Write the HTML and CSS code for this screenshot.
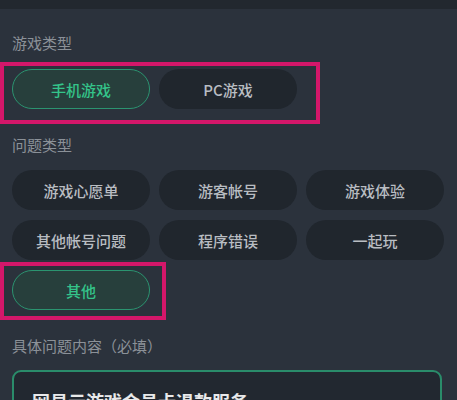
FILE: index.html
```html
<!DOCTYPE html>
<html lang="zh-CN">
<head>
    <meta charset="UTF-8">
    <meta name="viewport" content="width=device-width, initial-scale=1.0">
    <title>问题反馈</title>
    <link rel="stylesheet" href="styles.css">
</head>
<body>
    <div class="topbar"></div>
    <div class="form">
        <div class="label first">游戏类型</div>
        <div class="chip-row marked">
            <div class="chip selected">手机游戏</div>
            <div class="chip">PC游戏</div>
            <div class="mark mark-game"></div>
        </div>

        <div class="label">问题类型</div>
        <div class="chip-grid">
            <div class="chip">游戏心愿单</div>
            <div class="chip">游客帐号</div>
            <div class="chip">游戏体验</div>
            <div class="chip">其他帐号问题</div>
            <div class="chip">程序错误</div>
            <div class="chip">一起玩</div>
        </div>
        <div class="chip-row marked last-row">
            <div class="chip selected">其他</div>
            <div class="mark mark-other"></div>
        </div>

        <div class="label">具体问题内容（必填）</div>
        <div class="textbox">网易云游戏会员卡退款服务</div>
    </div>
</body>
</html>
```

FILE: styles.css
```css
body, html {
    margin: 0;
    height: 100%;
    overflow: hidden;
    background-color: #2b323c;
    font-family: "Noto Sans CJK SC", "Noto Sans", sans-serif;
}
.topbar {
    height: 9px;
    background-color: #22282f;
}
.form {
    padding: 0 15px 0 12px;
}
.label {
    font-size: 15px;
    line-height: 20px;
    color: #8b9198;
    margin-top: 26px;
}
.label.first {
    margin-top: 24px;
}
.chip-row {
    display: flex;
    gap: 9px;
    margin-top: 16px;
}
.marked {
    position: relative;
    width: max-content;
}
.chip-grid {
    display: grid;
    grid-template-columns: repeat(3, 138px);
    column-gap: 9px;
    row-gap: 10px;
    margin-top: 15px;
}
.last-row {
    margin-top: 10px;
}
.chip {
    width: 138px;
    height: 40px;
    box-sizing: border-box;
    border: 1.5px solid transparent;
    border-radius: 20px;
    background-color: #20262d;
    color: #b9bdc2;
    font-size: 15px;
    font-weight: 500;
    display: flex;
    align-items: center;
    justify-content: center;
}
.chip.selected {
    background-color: #273f3c;
    border-color: #2b9470;
    color: #34c48a;
}
.mark {
    position: absolute;
    border: 4px solid #d4176a;
    pointer-events: none;
}
.mark-game {
    top: -7px;
    left: -12px;
    right: -23px;
    bottom: -15px;
}
.mark-other {
    top: -8px;
    left: -12px;
    right: -16px;
    bottom: -10px;
}
.textbox {
    margin-top: 14px;
    height: 80px;
    border: 2px solid #2a8c6a;
    border-radius: 9px;
    background-color: #222830;
    padding: 16px 18px;
    font-size: 18px;
    line-height: 26px;
    font-weight: bold;
    color: #e8e9ea;
}
```
